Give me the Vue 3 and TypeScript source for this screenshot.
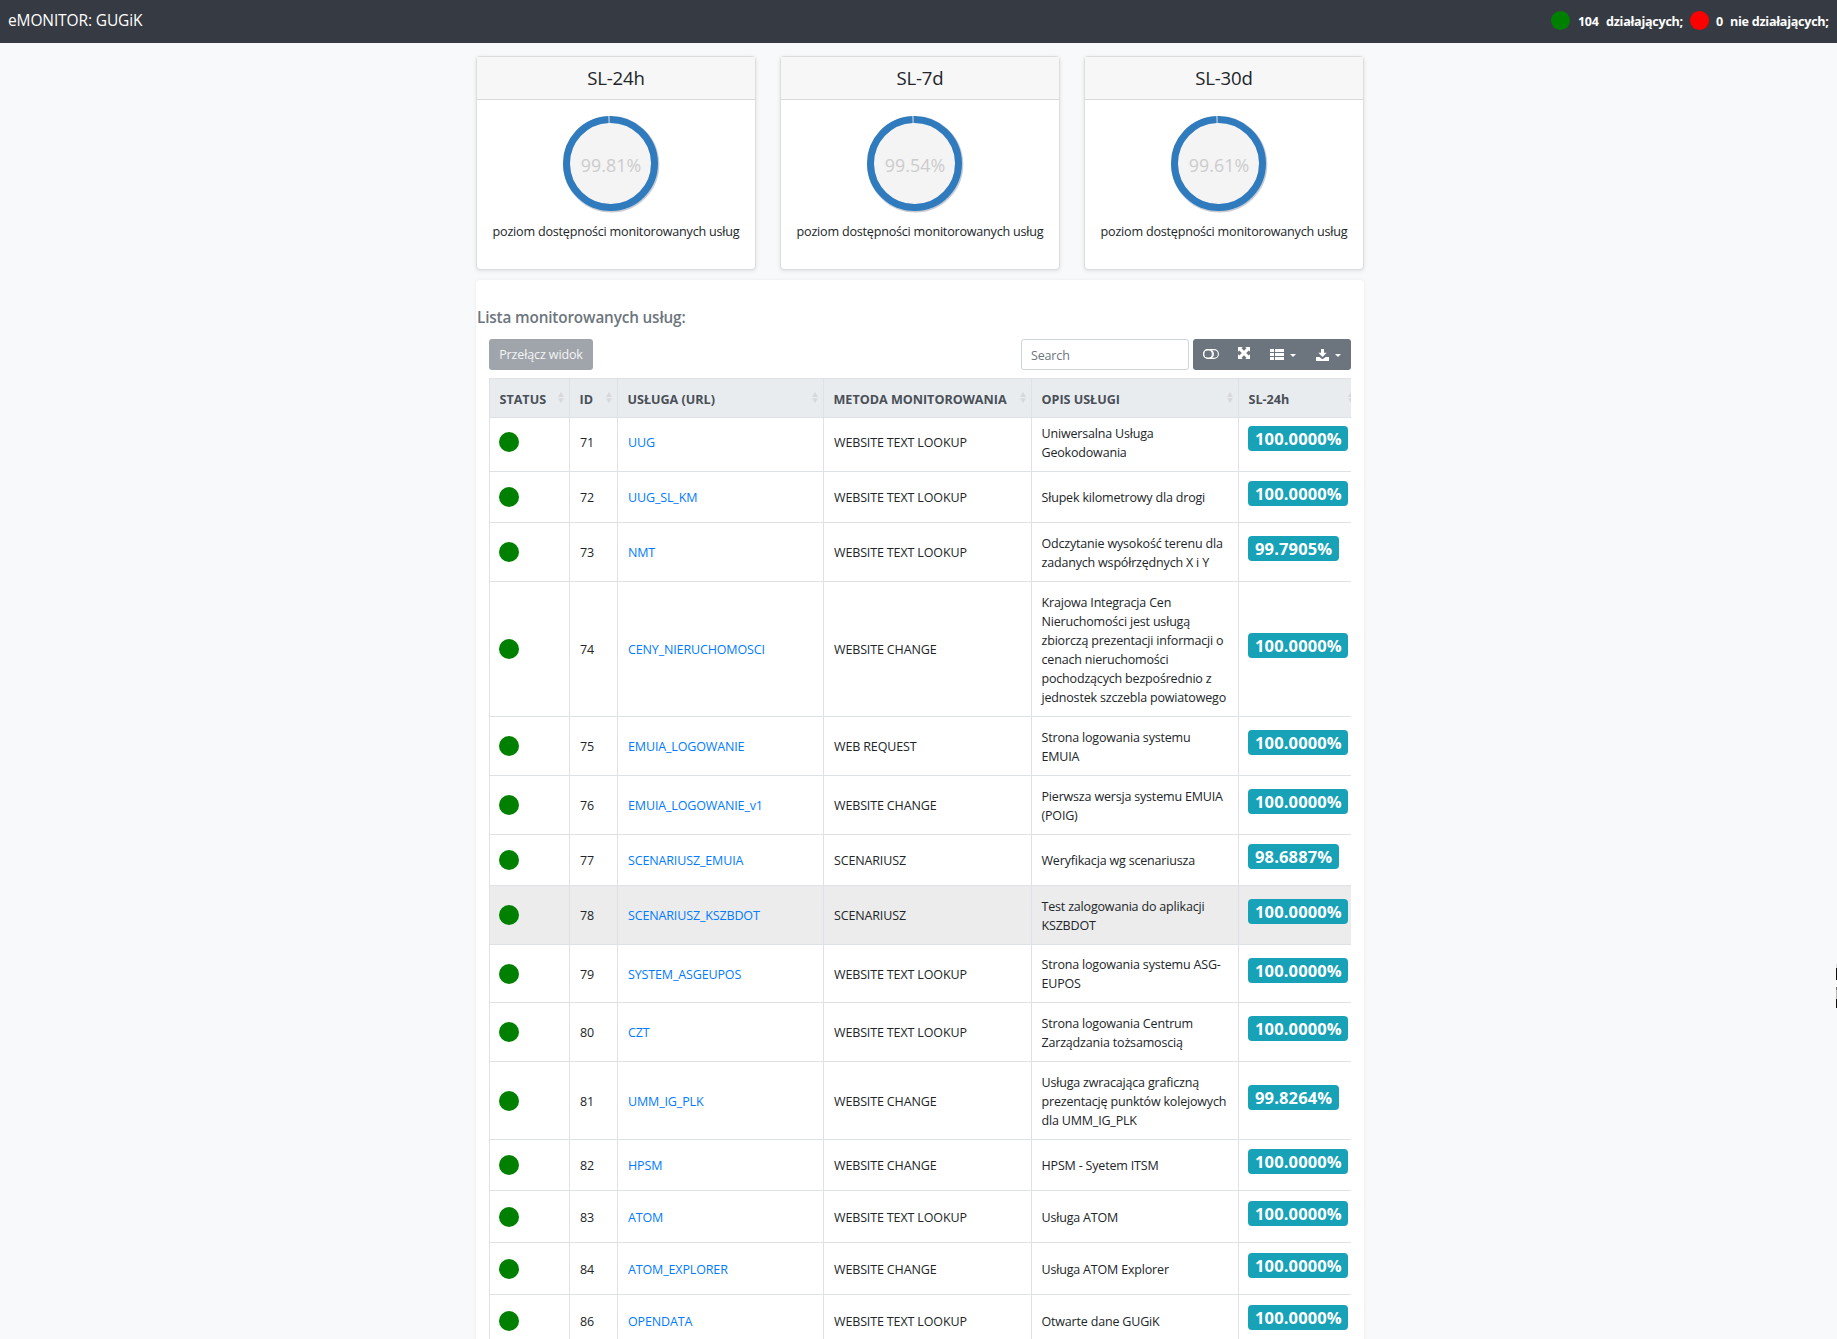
<script setup lang="ts">
interface Service {
  id: number
  name: string
  method: string
  desc: string
  level: string
  height: number
}

const LOOKUP = 'WEBSITE TEXT LOOKUP'
const CHANGE = 'WEBSITE CHANGE'
const SCENARIO = 'SCENARIUSZ'
const FULL = '100.0000%'

const gauges = [
  { title: 'SL-24h', value: 99.81 },
  { title: 'SL-7d', value: 99.54 },
  { title: 'SL-30d', value: 99.61 },
]

const columns = ['STATUS', 'ID', 'USŁUGA (URL)', 'METODA MONITOROWANIA', 'OPIS USŁUGI', 'SL-24h']

const services: Service[] = [
  { id: 71, name: 'UUG', method: LOOKUP, desc: 'Uniwersalna Usługa\nGeokodowania', level: FULL, height: 54 },
  { id: 72, name: 'UUG_SL_KM', method: LOOKUP, desc: 'Słupek kilometrowy dla drogi', level: FULL, height: 51 },
  { id: 73, name: 'NMT', method: LOOKUP, desc: 'Odczytanie wysokość terenu dla\nzadanych współrzędnych X i Y', level: '99.7905%', height: 59 },
  { id: 74, name: 'CENY_NIERUCHOMOSCI', method: CHANGE, desc: 'Krajowa Integracja Cen\nNieruchomości jest usługą\nzbiorczą prezentacji informacji o\ncenach nieruchomości\npochodzących bezpośrednio z\njednostek szczebla powiatowego', level: FULL, height: 135 },
  { id: 75, name: 'EMUIA_LOGOWANIE', method: 'WEB REQUEST', desc: 'Strona logowania systemu\nEMUIA', level: FULL, height: 59 },
  { id: 76, name: 'EMUIA_LOGOWANIE_v1', method: CHANGE, desc: 'Pierwsza wersja systemu EMUIA\n(POIG)', level: FULL, height: 59 },
  { id: 77, name: 'SCENARIUSZ_EMUIA', method: SCENARIO, desc: 'Weryfikacja wg scenariusza', level: '98.6887%', height: 51 },
  { id: 78, name: 'SCENARIUSZ_KSZBDOT', method: SCENARIO, desc: 'Test zalogowania do aplikacji\nKSZBDOT', level: FULL, height: 59 },
  { id: 79, name: 'SYSTEM_ASGEUPOS', method: LOOKUP, desc: 'Strona logowania systemu ASG-\nEUPOS', level: FULL, height: 58 },
  { id: 80, name: 'CZT', method: LOOKUP, desc: 'Strona logowania Centrum\nZarządzania tożsamoscią', level: FULL, height: 59 },
  { id: 81, name: 'UMM_IG_PLK', method: CHANGE, desc: 'Usługa zwracająca graficzną\nprezentację punktów kolejowych\ndla UMM_IG_PLK', level: '99.8264%', height: 78 },
  { id: 82, name: 'HPSM', method: CHANGE, desc: 'HPSM - Syetem ITSM', level: FULL, height: 51 },
  { id: 83, name: 'ATOM', method: LOOKUP, desc: 'Usługa ATOM', level: FULL, height: 52 },
  { id: 84, name: 'ATOM_EXPLORER', method: CHANGE, desc: 'Usługa ATOM Explorer', level: FULL, height: 52 },
  { id: 86, name: 'OPENDATA', method: LOOKUP, desc: 'Otwarte dane GUGiK', level: FULL, height: 52 },
]

const activeId = 78
</script>

<template>
  <div class="page">
    <header class="navbar">
      <span class="brand">eMONITOR: GUGiK</span>
      <div class="summary">
        <i class="dot up"></i><b class="count">104</b><b class="label">działających;</b>
        <i class="dot down"></i><b class="count zero">0</b><b class="label last">nie działających;</b>
      </div>
    </header>

    <main class="content">
      <section class="cards">
        <article v-for="g in gauges" :key="g.title" class="card">
          <h4 class="card-title">{{ g.title }}</h4>
          <div class="gauge">
            <svg class="ring" width="100" height="100" viewBox="0 0 100 100">
              <circle cx="48.3" cy="48.5" r="47" fill="none" stroke="#9aa3ad" stroke-width="2" opacity=".55" />
              <circle cx="47.5" cy="47.5" r="44" fill="#f4f4f4" stroke="#d5dbe2" stroke-width="7" />
              <circle cx="47.5" cy="47.5" r="44" fill="none" stroke="#307bbd" stroke-width="7"
                pathLength="100" stroke-dasharray="99.6 0.4" transform="rotate(-91.2 47.5 47.5)" />
            </svg>
            <span class="gauge-value">{{ g.value }}%</span>
          </div>
          <p class="card-text">poziom dostępności monitorowanych usług</p>
        </article>
      </section>

      <section class="panel">
        <h6 class="panel-title">Lista monitorowanych usług:</h6>
        <div class="toolbar">
          <button class="switch">Przełącz widok</button>
          <div class="tools">
            <input class="search" placeholder="Search" />
            <div class="icons">
              <svg class="toggle" width="16" height="10" viewBox="0 0 16 10" fill="none" stroke="#fff" stroke-width="1.1">
                <rect x=".6" y=".6" width="14.8" height="8.8" rx="4.4" />
                <circle cx="5" cy="5" r="4.4" />
                <path d="M8 .6a4.4 4.4 0 0 1 0 8.8" transform="translate(-1.2 0)" opacity="0" />
                <path d="M7.2.8a4.6 4.6 0 0 1 3.2 4.2 4.6 4.6 0 0 1-3.2 4.2" />
              </svg>
              <svg class="expand" width="12" height="12" viewBox="0 0 12 12" fill="#fff">
                <path d="M0 0h4.8L3.5 1.3 6 3.8l2.5-2.5L7.2 0H12v4.8l-1.3-1.3L8.2 6l2.5 2.5L12 7.2V12H7.2l1.3-1.3L6 8.2l-2.5 2.5L4.8 12H0V7.2l1.3 1.3L3.8 6 1.3 3.5 0 4.8z" />
              </svg>
              <svg class="list" width="14" height="11" viewBox="0 0 14 11" fill="#fff">
                <path d="M0 0h4v3H0zM5 0h9v3H5zM0 4h4v3H0zM5 4h9v3H5zM0 8h4v3H0zM5 8h9v3H5z" />
              </svg>
              <i class="caret"></i>
              <svg class="download" width="13" height="12" viewBox="0 0 13 12" fill="#fff">
                <path d="M5 0h3v3.8h2.7L6.5 8 2.3 3.8H5z" />
                <path d="M0 8h3.3l3.2 2.2L9.7 8H13v4H0z" />
              </svg>
              <i class="caret"></i>
            </div>
          </div>
        </div>

        <div class="table">
          <div class="row head">
            <div v-for="c in columns" :key="c" class="cell">
              <span>{{ c }}</span>
              <svg class="sort" width="6" height="11" viewBox="0 0 6 11" fill="#d6d8da">
                <path d="M3 0l3 5H0zM0 6.2h6L3 11z" />
              </svg>
            </div>
          </div>
          <div v-for="s in services" :key="s.id" class="row body" :class="{ active: s.id === activeId }"
            :style="{ height: s.height + 'px' }">
            <div class="cell"><i class="status"></i></div>
            <div class="cell text">{{ s.id }}</div>
            <div class="cell text"><a class="link">{{ s.name }}</a></div>
            <div class="cell text">{{ s.method }}</div>
            <div class="cell text desc">{{ s.desc }}</div>
            <div class="cell"><span class="badge">{{ s.level }}</span></div>
          </div>
        </div>
      </section>
    </main>
    <i class="edge"></i>
  </div>
</template>

<style>
body {
  margin: 0;
  background: #f8f9fb;
}
</style>

<style scoped>
* {
  box-sizing: border-box;
}

.page {
  position: relative;
  height: 100vh;
  overflow: hidden;
  background: #f8f9fb;
  color: #212529;
  font: 12.5px/19px "Open Sans", "Noto Sans", sans-serif;
  letter-spacing: -0.14px;
}

.navbar {
  display: flex;
  justify-content: space-between;
  align-items: center;
  height: 43px;
  padding: 0 8px 2px;
  background: #363a42;
  color: #fff;
}

.brand {
  font-size: 15.5px;
  letter-spacing: -0.12px;
}

.summary {
  display: flex;
  align-items: center;
}

.dot {
  width: 19px;
  height: 19px;
  border-radius: 50%;
}

.up {
  background: green;
}

.down {
  background: red;
  margin-left: 6px;
}

.count,
.label {
  padding-top: 1px;
}

.count {
  width: 28px;
  margin-left: 8.5px;
  letter-spacing: -0.3px;
}

.count.zero {
  width: 14px;
  margin-left: 7px;
}

.label {
  width: 78px;
  font-size: 12.6px;
  letter-spacing: -0.27px;
  white-space: nowrap;
}

.label.last {
  width: 99px;
}

.content {
  width: 888px;
  margin: 13px 0 0 476px;
}

.cards {
  display: flex;
  gap: 24px;
}

.card {
  width: 280px;
  height: 214px;
  border: 1px solid #dcdddd;
  border-radius: 4px;
  background: #fff;
  box-shadow: 0 1px 4px rgba(0, 0, 0, 0.1);
  text-align: center;
}

.card-title {
  height: 43px;
  margin: 0;
  border-bottom: 1px solid #d9d9d9;
  background: #f7f7f7;
  font-size: 18.6px;
  font-weight: 400;
  line-height: 41px;
  letter-spacing: -0.2px;
}

.gauge {
  display: grid;
  width: 95px;
  height: 95px;
  margin: 16px 0 0 86px;
}

.ring,
.gauge-value {
  grid-area: 1 / 1;
}

.gauge-value {
  width: 96px;
  padding-top: 2px;
  color: #ccc;
  font-size: 17.8px;
  line-height: 95px;
  letter-spacing: 0.05px;
}

.card-text {
  margin: 11px 0 0;
  font-size: 12.6px;
  letter-spacing: -0.22px;
}

.panel {
  height: 1100px;
  margin-top: 10px;
  padding-top: 25px;
  border-radius: 4px;
  background: #fff;
  box-shadow: 0 0 4px rgba(0, 0, 0, 0.06);
}

.panel-title {
  margin: 0 0 10px 1px;
  color: #6c757d;
  font-size: 15.3px;
  font-weight: 600;
  line-height: 24px;
  letter-spacing: -0.15px;
}

.toolbar {
  display: flex;
  justify-content: space-between;
  margin: 0 13px;
  height: 31px;
}

.switch {
  width: 104px;
  height: 31px;
  padding: 1px 0 0;
  border: 0;
  border-radius: 3px;
  background: #a0a5ab;
  color: #f4f5f6;
  font: 12.5px/30px "Open Sans", sans-serif;
  letter-spacing: -0.12px;
}

.tools {
  display: flex;
  gap: 4px;
}

.search {
  width: 168px;
  height: 31px;
  padding: 2px 9px 0;
  border: 1px solid #ced4da;
  border-radius: 3px;
  font: 12.5px "Open Sans", sans-serif;
  letter-spacing: -0.15px;
}

.search::placeholder {
  color: #6c757d;
}

.icons {
  display: flex;
  align-items: center;
  width: 158px;
  padding-left: 10px;
  border-radius: 3px;
  background: #6c757d;
}

.toggle {
  margin-bottom: 2px;
}

.expand {
  margin: 0 20px 3px 19px;
}

.list {
  margin-right: 6px;
}

.caret {
  width: 6px;
  border: 3px solid transparent;
  border-top-color: #fff;
  border-bottom: 0;
  margin-top: 1px;
}

.download {
  margin: 0 6px 0 20px;
}

.table {
  width: 862px;
  margin: 8px 0 0 13px;
  overflow: hidden;
}

.row {
  display: grid;
  grid-template-columns: 80px 48px 206px 208px 207px 121px;
  width: 870px;
  border-bottom: 1px solid #dee2e6;
}

.cell {
  display: flex;
  align-items: center;
  padding-left: 10px;
  border-left: 1px solid #dee2e6;
}

.head {
  height: 40px;
  border-top: 1px solid #dee2e6;
  background: #e9ecef;
  color: #495057;
  font-weight: 700;
  font-size: 12.6px;
  letter-spacing: -0.02px;
}

.head .cell {
  justify-content: space-between;
  padding: 3px 5px 0 9.5px;
}

.sort {
  margin-bottom: 4px;
}

.text {
  padding-top: 1px;
}

.body:nth-child(2) .cell {
  padding-bottom: 5px;
}

.active {
  background: #ececec;
}

.status {
  width: 20px;
  height: 20px;
  margin-left: -1px;
  border-radius: 50%;
  background: green;
}

.link {
  color: #007bff;
}

.desc {
  padding-left: 9.5px;
  letter-spacing: -0.18px;
  white-space: pre;
}

.badge {
  height: 25px;
  margin: 0 0 7px -1px;
  padding: 0 6.4px 0 7px;
  border-radius: 4px;
  background: #17a2b8;
  color: #fff;
  font-size: 16.5px;
  font-weight: 700;
  line-height: 26px;
  letter-spacing: 0.14px;
}

/* sliver of an overlay that reaches into the window's right edge */
.edge {
  position: absolute;
  top: 964px;
  right: 0;
  width: 1px;
  height: 44px;
  background: linear-gradient(#ddd 0 4px, #111 4px 16px, #fff 16px 23px, #777 23px 26px, #bbb 26px 35px, #111 35px);
}
</style>
